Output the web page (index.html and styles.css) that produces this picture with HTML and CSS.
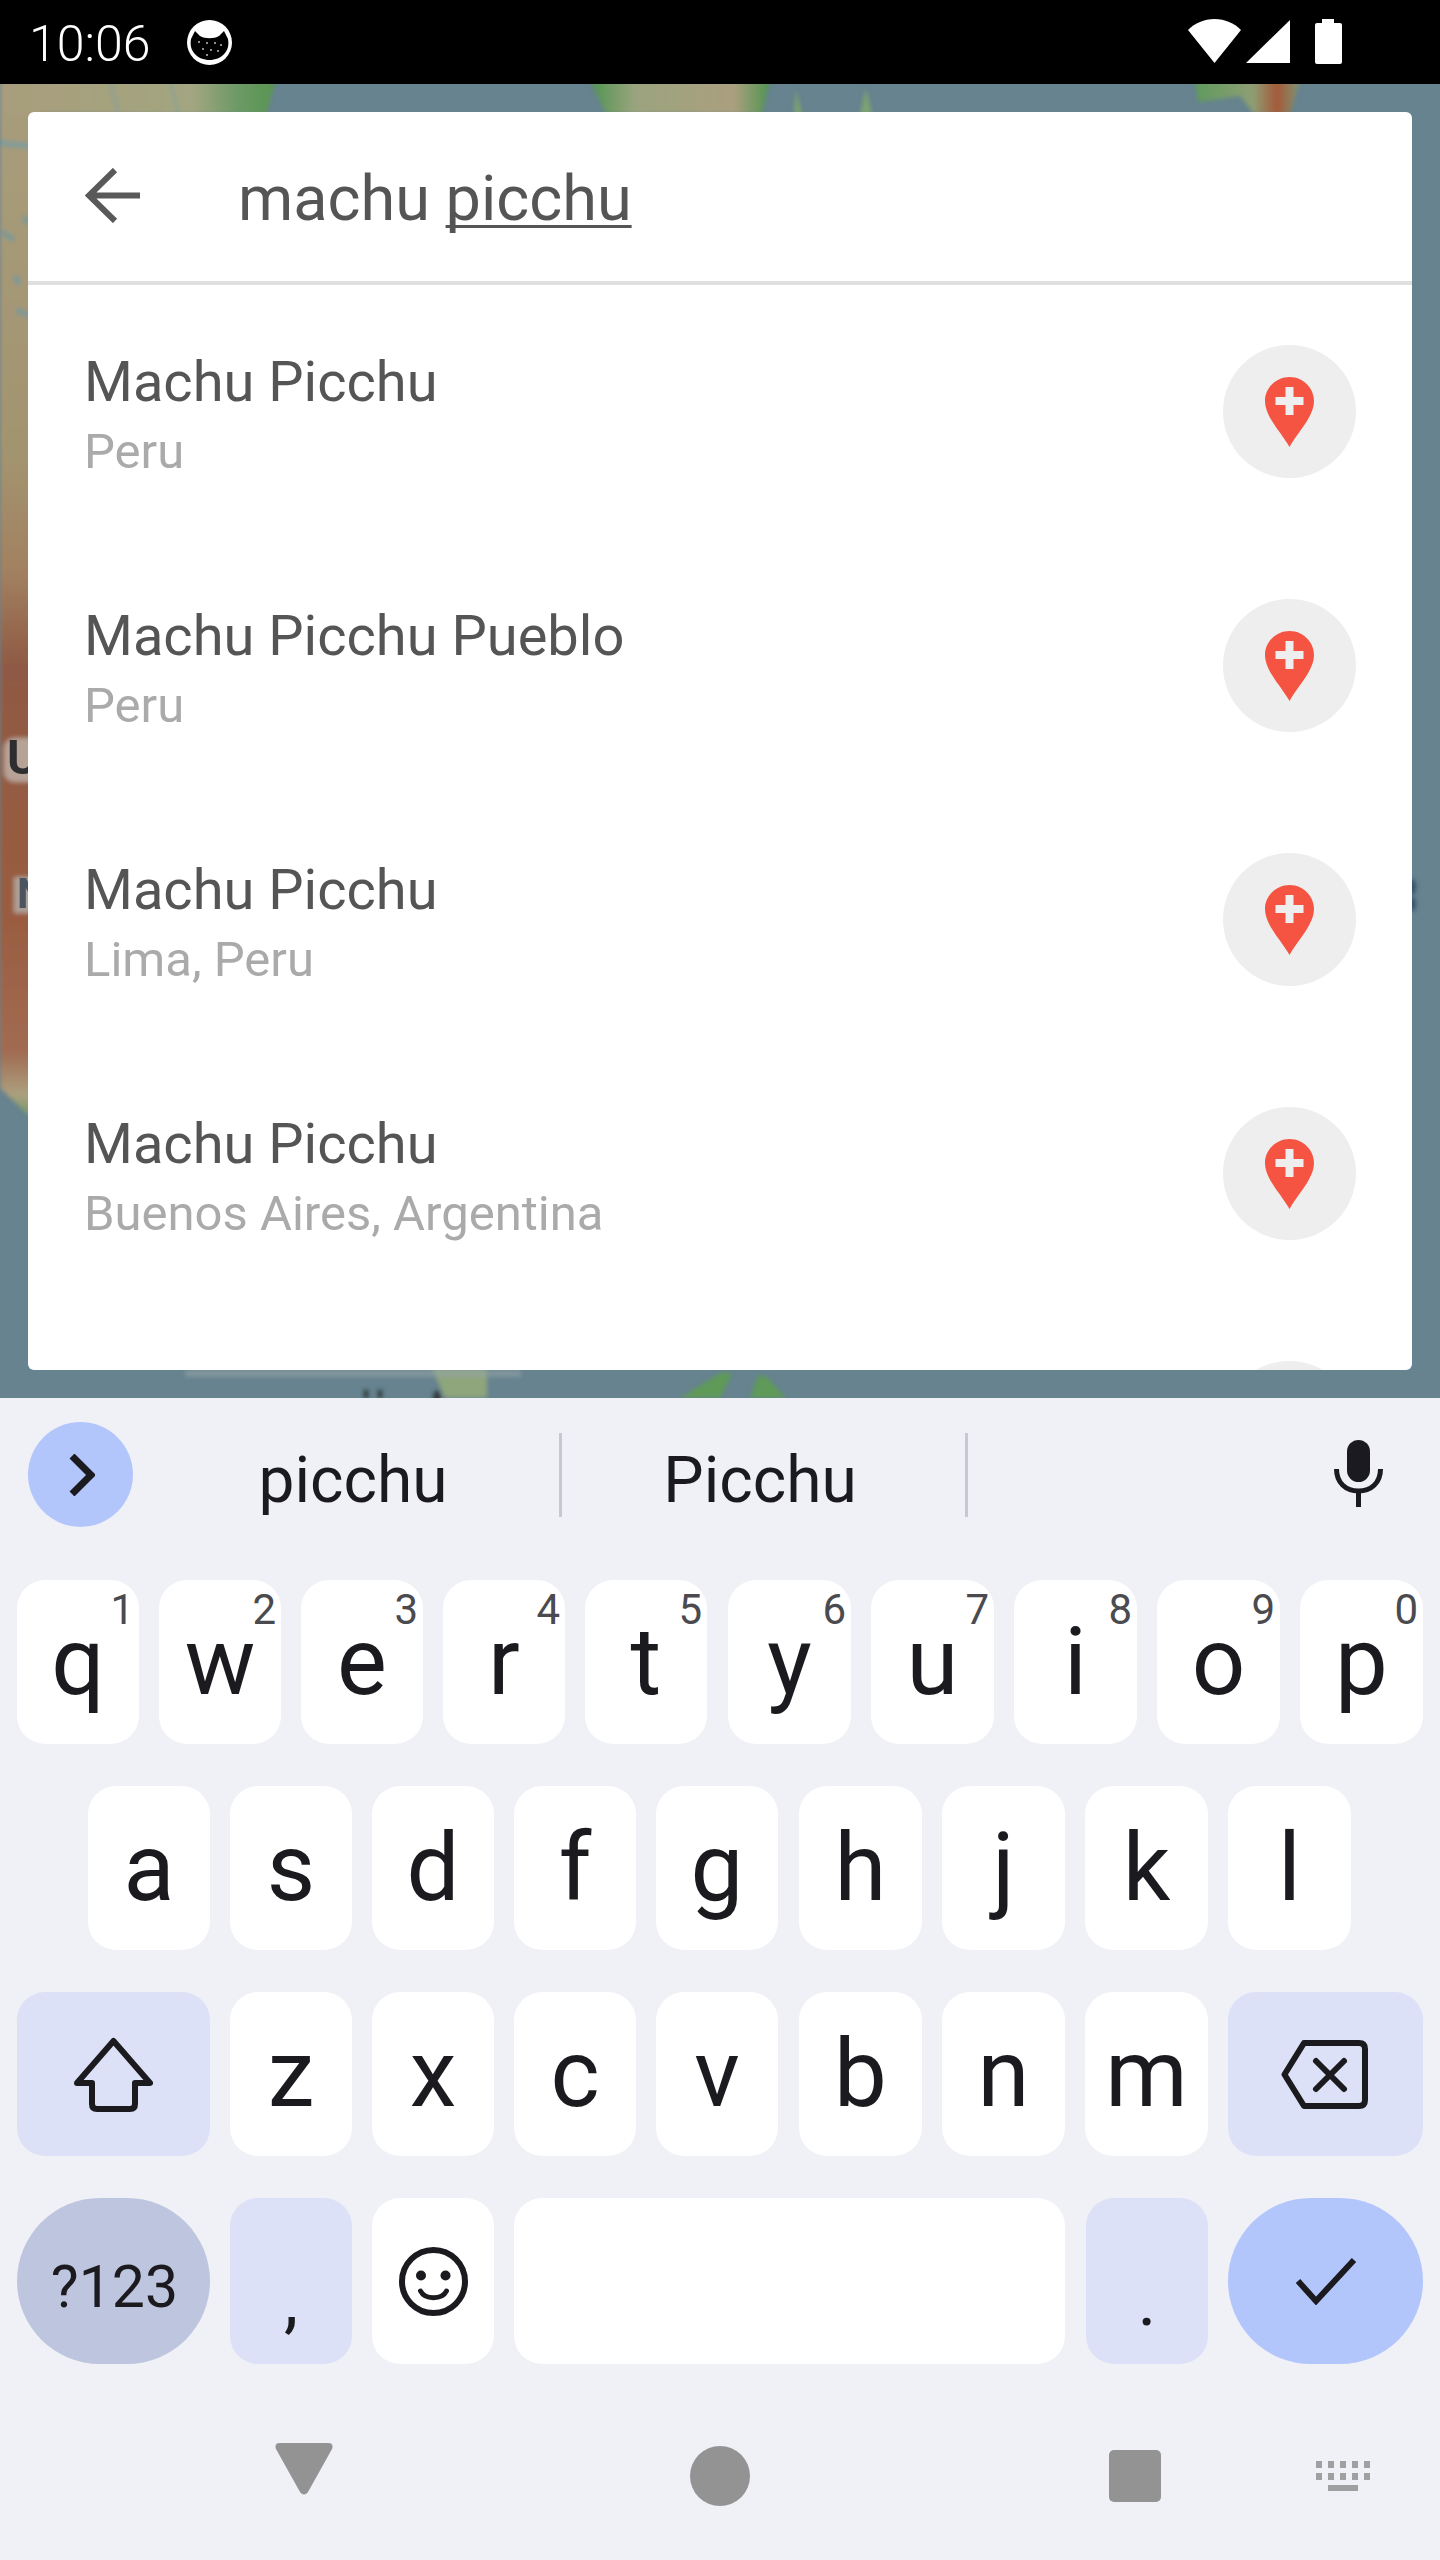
FILE: index.html
```html
<!DOCTYPE html>
<html lang="en">
<head>
<meta charset="utf-8">
<title>Search</title>
<link rel="stylesheet" href="styles.css">
</head>
<body>
<div class="screen">
  <header class="status">
    <span class="clock">10:06</span>
    <svg class="cat" viewBox="0 0 45 45"><circle cx="22.5" cy="22.5" r="22.5" fill="#fff"/><path d="M4 19 L8 11 L13 16 C18 19 27 19 32 16 L37 11 L41 19 C42 25 41 29 38 33 C34 38 28 40 22.5 40 C17 40 11 38 7 33 C4 29 3 25 4 19Z" fill="#000"/><g fill="#bbb"><circle cx="12" cy="22" r="1"/><circle cx="20" cy="23" r="1"/><circle cx="28" cy="23" r="1"/><circle cx="34" cy="25" r="1"/><circle cx="16" cy="29" r="1"/><circle cx="24" cy="30" r="1"/><circle cx="31" cy="31" r="1"/><circle cx="20" cy="35" r="1"/></g></svg>
    <div class="status-icons">
      <svg class="wifi" viewBox="0 0 53 44"><path d="M26.500 44 L0 11 C7 4 16 0 26.500 0 C37 0 46 4 53 11Z" fill="#fff"/></svg>
      <svg class="signal" viewBox="0 0 44 43"><path d="M0 43 L44 0 V43Z" fill="#fff"/></svg>
      <svg class="battery" viewBox="0 0 27 45"><path d="M7 0 H19 V4 H25 A2 2 0 0 1 27 6 V43 A2 2 0 0 1 25 45 H2 A2 2 0 0 1 0 43 V6 A2 2 0 0 1 2 4 H7Z" fill="#fff"/></svg>
    </div>
  </header>

  <main class="map">
    <svg class="map-art" viewBox="0 0 1440 1314">
      <defs>
        <linearGradient id="landLeft" x1="0" y1="0" x2="0" y2="1">
          <stop offset="0" stop-color="#a89d7c"/>
          <stop offset=".36" stop-color="#a3946f"/>
          <stop offset=".47" stop-color="#a28160"/>
          <stop offset=".56" stop-color="#8f5a44"/>
          <stop offset=".8" stop-color="#9a5c40"/>
          <stop offset=".93" stop-color="#a16c52"/>
          <stop offset=".97" stop-color="#aca07f"/>
          <stop offset="1" stop-color="#5c9a58"/>
        </linearGradient>
        <linearGradient id="landTop" x1="0" y1="0" x2="1" y2="0">
          <stop offset="0" stop-color="#a89d7c"/>
          <stop offset=".7" stop-color="#a3a680"/>
          <stop offset=".85" stop-color="#6f9a68"/>
          <stop offset="1" stop-color="#57954f"/>
        </linearGradient>
        <linearGradient id="landMid" x1="0" y1="0" x2="1" y2="0">
          <stop offset="0" stop-color="#4f9450"/>
          <stop offset=".25" stop-color="#9ba47e"/>
          <stop offset=".8" stop-color="#ab9f7e"/>
          <stop offset="1" stop-color="#4f9450"/>
        </linearGradient>
        <linearGradient id="landRed" x1="0" y1="0" x2="1" y2="0">
          <stop offset="0" stop-color="#5f9a5c"/>
          <stop offset=".55" stop-color="#8e9e74"/>
          <stop offset=".78" stop-color="#a5593a"/>
          <stop offset="1" stop-color="#7e9672"/>
        </linearGradient>
        <filter id="soft" x="-20%" y="-20%" width="140%" height="140%"><feGaussianBlur stdDeviation="2"/></filter>
      </defs>
      <g filter="url(#soft)">
        <path d="M0 -4 H40 V1042 L0 1004Z" fill="url(#landLeft)"/>
        <path d="M0 -4 H276 L266 30 H0Z" fill="url(#landTop)"/>
        <path d="M0 58 C10 62 20 60 34 62" stroke="#6f9ca6" stroke-width="6" fill="none" opacity=".7"/>
        <path d="M2 148 L14 156 M14 192 L20 200 M16 226 L30 232 M24 132 L28 140" stroke="#6d98a3" stroke-width="6" fill="none" opacity=".7"/>
        <path d="M110 -2 L118 28 M170 -2 L178 28" stroke="#7a9ea2" stroke-width="3" fill="none" opacity=".6"/>
        <path d="M590 -4 H770 L762 30 H606Z" fill="url(#landMid)"/>
        <path d="M796 6 L802 30 L794 30Z M866 4 L872 30 L860 30Z" fill="#7ea36f"/>
        <path d="M1195 -4 H1300 L1290 30 H1254 L1240 12 L1198 18Z" fill="url(#landRed)"/>
        <path d="M432 1284 L487 1284 L487 1314 L445 1314Z" fill="#8fa57c"/>
        <path d="M680 1314 L722 1288 L732 1290 L720 1314Z M758 1292 L766 1292 L786 1314 L750 1314Z" fill="#5f9a58"/>
        <rect x="185" y="1286" width="336" height="7" fill="#94a3a6" opacity=".6"/>
        <ellipse cx="437" cy="1316" rx="4" ry="10" fill="#33393c"/>
        <path d="M366 1314 V1306 M380 1314 V1306" stroke="#2b3033" stroke-width="4"/>
        <ellipse cx="1412" cy="803" rx="4" ry="8" fill="#34506b"/>
        <ellipse cx="1412" cy="820" rx="4" ry="7" fill="#34506b"/>
        <rect x="4" y="654" width="40" height="44" rx="10" fill="#bdb0a4" opacity=".85"/>
        <rect x="14" y="793" width="30" height="36" fill="#b2aba6" opacity=".85"/>
      </g>
      <text class="map-label" x="7" y="690">U</text>
      <text class="map-label map-label-dim" x="17" y="824">N</text>
    </svg>

    <section class="card">
      <div class="search">
        <svg class="back" viewBox="0 0 55 55"><path d="M55 27.500 H4 M30 2 L4 27.500 L30 53" fill="none" stroke="#595959" stroke-width="6"/></svg>
        <span class="query">machu <u class="query-word">picchu</u></span>
      </div>
      <div class="results">
        <article class="result">
          <div class="result-text"><div class="result-title">Machu Picchu</div><div class="result-sub">Peru</div></div>
          <div class="add"><svg class="pin" viewBox="0 0 49 70"><path d="M24.500 0 C38 0 49 11 49 24 C49 40 32 56 24.500 70 C17 56 0 40 0 24 C0 11 11 0 24.500 0Z" fill="#f55442"/><path d="M20.500 10 H28.500 V20 H38.500 V28 H28.500 V38 H20.500 V28 H10.500 V20 H20.500Z" fill="#eee"/></svg></div>
        </article>
        <article class="result">
          <div class="result-text"><div class="result-title">Machu Picchu Pueblo</div><div class="result-sub">Peru</div></div>
          <div class="add"><svg class="pin" viewBox="0 0 49 70"><path d="M24.500 0 C38 0 49 11 49 24 C49 40 32 56 24.500 70 C17 56 0 40 0 24 C0 11 11 0 24.500 0Z" fill="#f55442"/><path d="M20.500 10 H28.500 V20 H38.500 V28 H28.500 V38 H20.500 V28 H10.500 V20 H20.500Z" fill="#eee"/></svg></div>
        </article>
        <article class="result">
          <div class="result-text"><div class="result-title">Machu Picchu</div><div class="result-sub">Lima, Peru</div></div>
          <div class="add"><svg class="pin" viewBox="0 0 49 70"><path d="M24.500 0 C38 0 49 11 49 24 C49 40 32 56 24.500 70 C17 56 0 40 0 24 C0 11 11 0 24.500 0Z" fill="#f55442"/><path d="M20.500 10 H28.500 V20 H38.500 V28 H28.500 V38 H20.500 V28 H10.500 V20 H20.500Z" fill="#eee"/></svg></div>
        </article>
        <article class="result">
          <div class="result-text"><div class="result-title">Machu Picchu</div><div class="result-sub">Buenos Aires, Argentina</div></div>
          <div class="add"><svg class="pin" viewBox="0 0 49 70"><path d="M24.500 0 C38 0 49 11 49 24 C49 40 32 56 24.500 70 C17 56 0 40 0 24 C0 11 11 0 24.500 0Z" fill="#f55442"/><path d="M20.500 10 H28.500 V20 H38.500 V28 H28.500 V38 H20.500 V28 H10.500 V20 H20.500Z" fill="#eee"/></svg></div>
        </article>
        <article class="result">
          <div class="result-text"></div>
          <div class="add"></div>
        </article>
      </div>
    </section>
  </main>

  <section class="keyboard">
    <div class="strip">
      <div class="expand"><svg class="chevron" viewBox="0 0 26 42"><path d="M3 2 L22 21 L3 40" fill="none" stroke="#1b1b1f" stroke-width="7"/></svg></div>
      <div class="candidate candidate-first">picchu</div>
      <div class="strip-divider"></div>
      <div class="candidate candidate-second">Picchu</div>
      <div class="strip-divider"></div>
      <svg class="mic" viewBox="0 0 49 67"><rect x="13" y="0" width="23" height="42" rx="11.500" fill="#1b1b1f"/><path d="M2.500 29 C2.500 43 12 51 24.500 51 C37 51 46.500 43 46.500 29" fill="none" stroke="#1b1b1f" stroke-width="5"/><rect x="22" y="50" width="5" height="17" fill="#1b1b1f"/></svg>
    </div>
    <div class="rows">
      <div class="row">
        <div class="key">q<span class="hint">1</span></div>
        <div class="key">w<span class="hint">2</span></div>
        <div class="key">e<span class="hint">3</span></div>
        <div class="key">r<span class="hint">4</span></div>
        <div class="key">t<span class="hint">5</span></div>
        <div class="key key-r">y<span class="hint">6</span></div>
        <div class="key key-r">u<span class="hint">7</span></div>
        <div class="key key-r">i<span class="hint">8</span></div>
        <div class="key key-r">o<span class="hint">9</span></div>
        <div class="key key-r">p<span class="hint">0</span></div>
      </div>
      <div class="row row-inset">
        <div class="key">a</div><div class="key">s</div><div class="key">d</div><div class="key">f</div><div class="key">g</div><div class="key key-r">h</div><div class="key key-r">j</div><div class="key key-r">k</div><div class="key key-r">l</div>
      </div>
      <div class="row">
        <div class="key key-shift key-mod"><svg class="shift" viewBox="0 0 79 75"><path d="M39.500 4 L76 46 H61 V67 Q61 72 56 72 H23 Q18 72 18 67 V46 H3Z" fill="none" stroke="#1b1b1f" stroke-width="6" stroke-linejoin="round"/></svg></div>
        <div class="key">z</div><div class="key">x</div><div class="key">c</div><div class="key">v</div><div class="key key-r">b</div><div class="key key-r">n</div><div class="key key-r">m</div>
        <div class="key key-action key-mod"><svg class="backspace" viewBox="0 0 87 69"><path d="M3.500 34.500 L23 3 H78 Q84 3 84 9 V60 Q84 66 78 66 H23Z" fill="none" stroke="#1b1b1f" stroke-width="6" stroke-linejoin="round"/><path d="M35 21 L63 49 M63 21 L35 49" fill="none" stroke="#1b1b1f" stroke-width="6" stroke-linecap="round"/></svg></div>
      </div>
      <div class="row row-bottom">
        <div class="key key-shift key-pill key-sym">?123</div>
        <div class="key key-mod key-punct">,</div>
        <div class="key"><svg class="emoji" viewBox="0 0 69 69"><circle cx="34.500" cy="34.500" r="31.500" fill="none" stroke="#1b1b1f" stroke-width="6"/><circle cx="22" cy="28.500" r="5" fill="#1b1b1f"/><circle cx="46.500" cy="28.500" r="5" fill="#1b1b1f"/><path d="M21.500 44 C26 53 43 53 47.500 44" fill="none" stroke="#1b1b1f" stroke-width="5" stroke-linecap="round"/></svg></div>
        <div class="key key-space"></div>
        <div class="key key-mod key-punct key-period">.</div>
        <div class="key key-action key-pill key-enter"><svg class="check" viewBox="0 0 62 48"><path d="M3 24 L21 44 L59 3" fill="none" stroke="#1b1b1f" stroke-width="6"/></svg></div>
      </div>
    </div>
    <nav class="nav">
      <svg class="nav-back" viewBox="0 0 58 52"><path d="M5 0 H53 Q59 0 57 6 L33 49 Q29 54 25 49 L1 6 Q-1 0 5 0Z" fill="#939394"/></svg>
      <div class="nav-home"></div>
      <div class="nav-recent"></div>
      <svg class="nav-kb" viewBox="0 0 54 30"><g fill="#a0a0a2"><rect x="0" y="0" width="6" height="7"/><rect x="12" y="0" width="6" height="7"/><rect x="24" y="0" width="6" height="7"/><rect x="36" y="0" width="6" height="7"/><rect x="48" y="0" width="6" height="7"/><rect x="0" y="12" width="6" height="7"/><rect x="12" y="12" width="6" height="7"/><rect x="24" y="12" width="6" height="7"/><rect x="36" y="12" width="6" height="7"/><rect x="48" y="12" width="6" height="7"/><rect x="12" y="24" width="30" height="6"/></g></svg>
    </nav>
  </section>
</div>
</body>
</html>
```

FILE: styles.css
```css
* { box-sizing: border-box; }
html, body { margin: 0; padding: 0; }
body { font-family: Roboto, "Liberation Sans", sans-serif; background: #000; }
.screen { width: 1440px; height: 2560px; display: flex; flex-direction: column; overflow: hidden; }

/* status bar */
.status { height: 84px; flex: none; background: #000; display: flex; align-items: flex-start; padding: 0 98px 0 29px; color: #fff; }
.clock { font-size: 50px; font-weight: 300; line-height: 56px; margin-top: 16px; width: 158px; }
.cat { width: 45px; height: 45px; margin-top: 20px; }
.status-icons { margin-left: auto; display: flex; align-items: flex-start; margin-top: 19px; }
.wifi { width: 53px; height: 44px; }
.signal { width: 44px; height: 43px; margin: 1px 0 0 5px; }
.battery { width: 27px; height: 45px; margin-left: 25px; }

/* map + search card */
.map { height: 1314px; flex: none; position: relative; background: #66838f; padding: 28px; }
.map-art { position: absolute; left: 0; top: 0; width: 1440px; height: 1314px; }
.map-label { font-family: Roboto, sans-serif; font-weight: 700; font-size: 48px; fill: #2e2e30; }
.map-label-dim { font-size: 42px; fill: #4a5560; }
.card { position: relative; height: 1258px; background: #fff; border-radius: 6px; overflow: hidden; }
.search { height: 173px; border-bottom: 4px solid #e0e0e0; display: flex; align-items: flex-start; padding-left: 57px; }
.back { width: 55px; height: 55px; margin-top: 56px; }
.query { font-size: 63px; line-height: 74px; color: #555; margin: 50px 0 0 98px; }
.query-word { text-decoration: underline; text-decoration-thickness: 3px; text-underline-offset: 5px; text-decoration-skip-ink: none; }
.results { margin-top: -1px; }
.result { height: 254px; display: flex; align-items: center; justify-content: space-between; padding: 0 56px 0 56px; }
.result-text { padding-top: 12px; }
.result-title { font-size: 56px; line-height: 66px; color: #555; }
.result-sub { font-size: 49px; line-height: 67px; color: #aaa; margin-top: 3px; }
.add { width: 133px; height: 133px; border-radius: 50%; background: #eee; display: flex; align-items: center; justify-content: center; }
.pin { width: 49px; height: 70px; margin-top: 2px; }

/* keyboard */
.keyboard { flex: 1; background: #f0f0f7; display: flex; flex-direction: column; color: #1b1b1f; }
.strip { height: 182px; flex: none; display: flex; align-items: flex-start; padding: 24px 57px 0 28px; }
.expand { width: 105px; height: 105px; border-radius: 50%; background: #b3c6fc; display: flex; align-items: center; justify-content: center; }
.chevron { width: 26px; height: 42px; margin-left: 2px; }
.candidate { height: 105px; display: flex; align-items: center; justify-content: center; font-size: 64px; padding-top: 12px; }
.candidate-first { width: 412px; margin-left: 14px; }
.candidate-second { width: 403px; padding-right: 7px; }
.strip-divider { width: 3px; height: 84px; margin-top: 11px; background: #c8c8d0; }
.mic { width: 49px; height: 67px; margin: 18px 0 0 auto; }

.rows { display: flex; flex-direction: column; gap: 42px; padding: 0 17px; }
.row { display: flex; gap: 20px; height: 164px; }
.row-inset { padding-left: 71px; }
.row-bottom { height: 166px; }
.key { position: relative; flex: 0 0 122px; background: #fff; border-radius: 28px; display: flex; align-items: center; justify-content: center; font-size: 94px; }
.key-r { flex-basis: 123px; }
.key:not(.key-r) + .key-r { margin-left: 1px; }
.hint { position: absolute; top: 5px; right: 5px; font-size: 42px; color: #4a4a4f; }
.key-shift { flex-basis: 193px; }
.key-action { flex-basis: 195px; }
.key-mod { background: #dce1f7; }
.key-pill { border-radius: 83px; }
.key-sym { background: #bec5de; font-size: 59px; padding: 10px 0 0 2px; }
.key-enter { background: #b3c6fc; }
.key-space { flex: 1; }
.key-punct { font-size: 72px; padding-top: 38px; }
.key-period { margin-left: 1px; }
.shift { width: 79px; height: 75px; }
.backspace { width: 87px; height: 69px; margin-left: -3px; }
.emoji { width: 69px; height: 69px; }
.check { width: 62px; height: 48px; }

.nav { flex: 1; display: flex; align-items: center; padding: 28px 0 0 275px; }
.nav-back { width: 58px; height: 52px; margin-bottom: 14px; }
.nav-home { width: 60px; height: 60px; border-radius: 50%; background: #939394; margin-left: 357px; }
.nav-recent { width: 52px; height: 52px; border-radius: 5px; background: #939394; margin-left: 359px; }
.nav-kb { width: 54px; height: 30px; margin-left: 155px; }
```
